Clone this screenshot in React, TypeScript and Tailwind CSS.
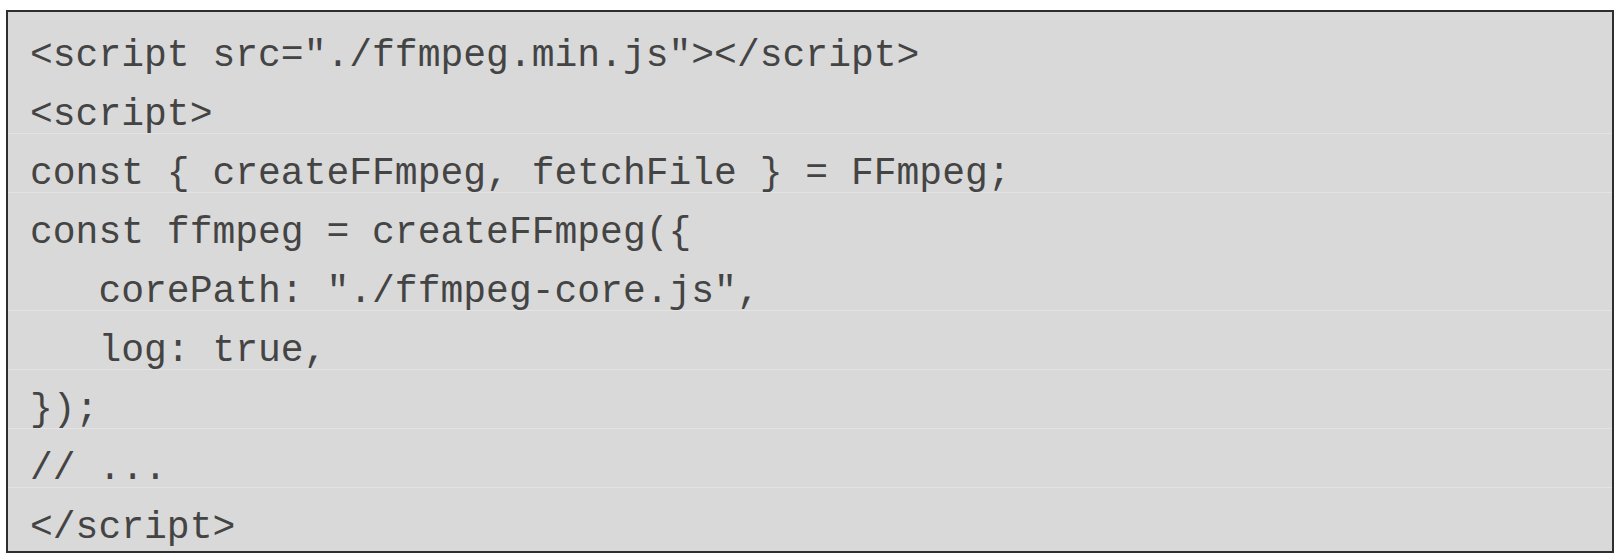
const lines: { text: string; rule: boolean }[] = [
  { text: '<script src="./ffmpeg.min.js"></script>', rule: false },
  { text: "<script>", rule: true },
  { text: "const { createFFmpeg, fetchFile } = FFmpeg;", rule: true },
  { text: "const ffmpeg = createFFmpeg({", rule: false },
  { text: '   corePath: "./ffmpeg-core.js",', rule: true },
  { text: "   log: true,", rule: true },
  { text: "});", rule: true },
  { text: "// ...", rule: true },
  { text: "</script>", rule: false },
];

export default function App() {
  return (
    <div className="w-[1622px] h-[560px] bg-white pt-[10px] pl-[6px]">
      <div className="w-[1608px] border-2 border-[#2e2e2e] bg-[#d9d9d9] py-[4px]">
        {lines.map((l, i) => (
          <div
            key={i}
            className={
              l.rule
                ? "h-[59px] pt-[20px] pl-[22px] border-b border-[#e3e3e3] box-border"
                : "h-[59px] pt-[20px] pl-[22px] box-border"
            }
          >
            <pre className="font-['Liberation_Mono','Courier_New',monospace] text-[38px] leading-[40px] text-[#444444] whitespace-pre">
              {l.text}
            </pre>
          </div>
        ))}
      </div>
    </div>
  );
}
